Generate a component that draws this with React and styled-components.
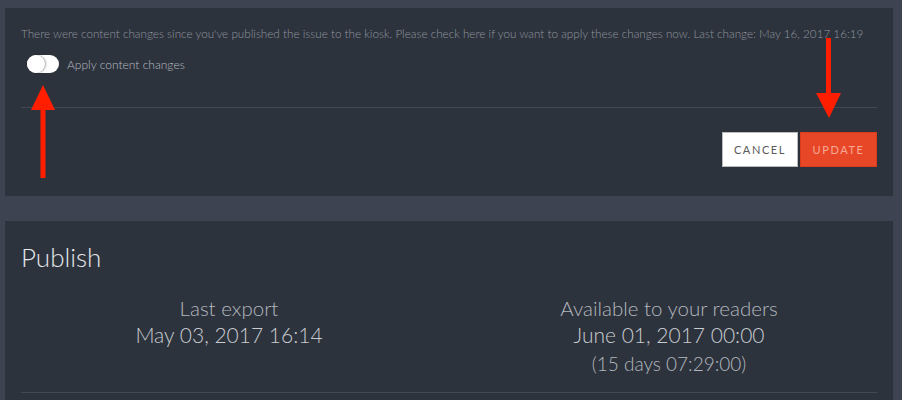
import React, { useState } from 'react';
import styled, { createGlobalStyle } from 'styled-components';

const GlobalStyle = createGlobalStyle`
  html, body {
    margin: 0;
    padding: 0;
    background: #3d4350;
  }
  body {
    font-family: Lato, "Open Sans", "Liberation Sans", sans-serif;
    font-weight: 300;
  }
`;

const Page = styled.div`
  position: relative;
  width: 902px;
  height: 400px;
  overflow: hidden;
  padding: 8px 9px 0 5px;
  box-sizing: border-box;
  display: flex;
  flex-direction: column;
  gap: 25px;
`;

const Panel = styled.section`
  background: #2d333d;
  padding: ${props => props.pad || '0 16px'};
`;

const Notice = styled.p`
  margin: 17px 0 0;
  font-size: 11.7px;
  line-height: 16px;
  color: #8f959d;
  white-space: nowrap;
`;

const ToggleRow = styled.label`
  display: flex;
  align-items: center;
  gap: 8px;
  margin: 13px 0 0 6px;
  height: 20px;
  cursor: pointer;
`;

const Track = styled.span`
  position: relative;
  width: 32px;
  height: 18px;
  border-radius: 9px;
  background: #ffffff;
  flex: none;
`;

const Knob = styled.span`
  position: absolute;
  top: 0;
  left: ${props => (props.on ? '14px' : '0')};
  width: 18px;
  height: 18px;
  border-radius: 50%;
  background: #ffffff;
  box-shadow: 1px 0 2px rgba(0, 0, 0, 0.35);
`;

const ToggleLabel = styled.span`
  font-size: 12px;
  color: #b6bbc1;
`;

const Divider = styled.hr`
  border: 0;
  border-top: 1px solid #414753;
  margin: ${props => props.m || '0'};
`;

const Actions = styled.div`
  display: flex;
  justify-content: flex-end;
  gap: 2px;
  margin-top: 24px;
  padding-bottom: 29px;
`;

const Button = styled.button`
  height: 35px;
  width: ${props => props.w}px;
  box-sizing: border-box;
  font-family: Lato, "Liberation Sans", sans-serif;
  font-weight: 400;
  font-size: 11px;
  letter-spacing: 1.6px;
  text-transform: uppercase;
  cursor: pointer;
  border: 1px solid ${props => (props.primary ? '#d93b1f' : '#bcbcbc')};
  background: ${props => (props.primary ? '#e84727' : '#ffffff')};
  color: ${props => (props.primary ? '#f6a896' : '#5a5a5a')};
`;

const Title = styled.h2`
  margin: 0;
  font-size: 26px;
  line-height: 34px;
  font-weight: 300;
  color: #e4e6e9;
`;

const Stats = styled.div`
  display: grid;
  grid-template-columns: 440px 440px;
  justify-content: center;
  margin: 22px -16px 0;
`;

const Stat = styled.div`
  display: flex;
  flex-direction: column;
  align-items: center;
  color: #c3c7cc;
`;

const StatLabel = styled.span`
  font-size: 20.5px;
  line-height: 24px;
  color: #b3b7bd;
`;

const StatValue = styled.span`
  font-size: 21px;
  line-height: 28px;
  margin-top: 1px;
  color: #c8cbd0;
`;

const StatNote = styled.span`
  font-size: 19px;
  line-height: 26px;
  margin-top: 2px;
  color: #b3b7bd;
`;

const Arrow = styled.svg`
  position: absolute;
  left: ${props => props.x}px;
  top: ${props => props.y}px;
  pointer-events: none;
`;

export default function App() {
  const [apply, setApply] = useState(false);

  return (
    <Page>
      <GlobalStyle />
      <Panel>
        <Notice>
          There were content changes since you've published the issue to the kiosk. Please check here if you want to apply these changes now. Last change: May 16, 2017 16:19
        </Notice>
        <ToggleRow onClick={() => setApply(!apply)}>
          <Track>
            <Knob on={apply ? 1 : 0} />
          </Track>
          <ToggleLabel>Apply content changes</ToggleLabel>
        </ToggleRow>
        <Divider m="33px 0 0" />
        <Actions>
          <Button w={76}>Cancel</Button>
          <Button w={77} primary>Update</Button>
        </Actions>
      </Panel>

      <Panel pad="19px 16px 40px">
        <Title>Publish</Title>
        <Stats>
          <Stat>
            <StatLabel>Last export</StatLabel>
            <StatValue>May 03, 2017 16:14</StatValue>
          </Stat>
          <Stat>
            <StatLabel>Available to your readers</StatLabel>
            <StatValue>June 01, 2017 00:00</StatValue>
            <StatNote>(15 days 07:29:00)</StatNote>
          </Stat>
        </Stats>
        <Divider m="15px 0 0" />
      </Panel>

      <Arrow x={31} y={85} width="24" height="93" viewBox="0 0 24 93">
        <polygon points="12,0 24,25 0,25" fill="#ff1f00" />
        <rect x="9.5" y="24" width="5" height="69" fill="#ff1f00" />
      </Arrow>
      <Arrow x={816} y={38} width="25" height="80" viewBox="0 0 25 80">
        <rect x="10" y="0" width="5" height="56" fill="#ff1f00" />
        <polygon points="0,55 25,55 13,80" fill="#ff1f00" />
      </Arrow>
    </Page>
  );
}
